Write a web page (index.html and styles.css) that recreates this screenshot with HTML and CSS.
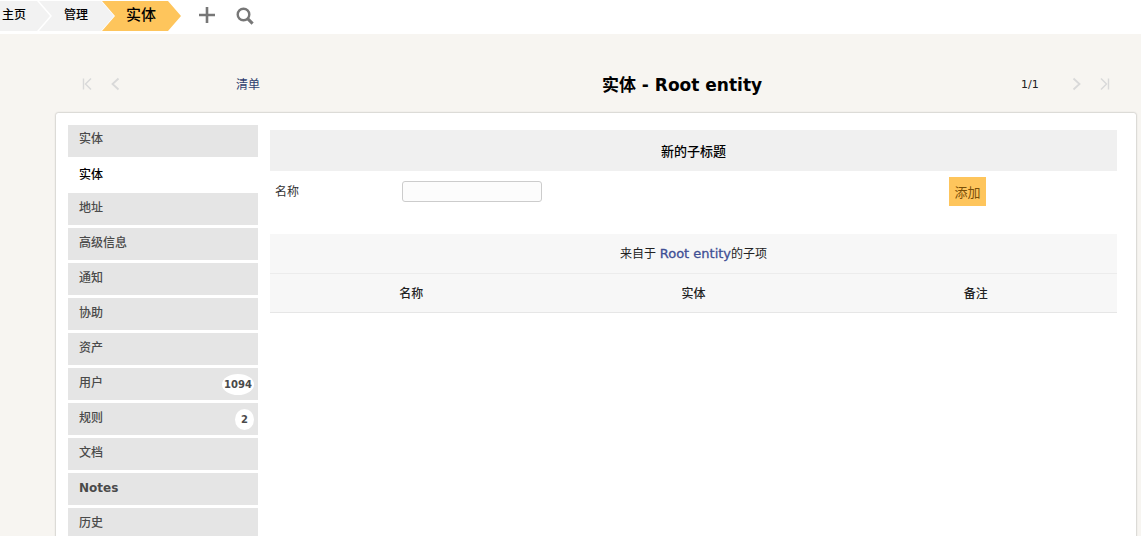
FILE: index.html
```html
<!DOCTYPE html>
<html lang="zh">
<head>
    <meta charset="UTF-8">
    <meta name="viewport" content="width=device-width, initial-scale=1.0">
    <title>实体</title>
    <link rel="stylesheet" href="styles.css">
</head>
<body>
    <nav class="topbar">
        <a class="crumb crumbhome">主页</a>
        <a class="crumb crumbadmin">管理</a>
        <a class="crumb crumbactive">实体</a>
        <svg class="topicon topplus" width="18" height="18" viewBox="0 0 18 18"><path d="M9 1v16M1 9h16" fill="none" stroke="#777" stroke-width="2.6"/></svg>
        <svg class="topicon topsearch" width="18" height="18" viewBox="0 0 18 18"><circle cx="7.5" cy="7.5" r="5.8" fill="none" stroke="#777" stroke-width="2.4"/><path d="M11.6 11.6l5 5" fill="none" stroke="#777" stroke-width="3"/></svg>
    </nav>

    <header class="pagehead">
        <div class="pagerleft">
            <svg class="pagericon" width="10" height="14" viewBox="0 0 10 14"><path d="M1.5 1.500v11M9 1.500L3.500 7 9 12.500" fill="none" stroke="#d9d9d9" stroke-width="1.400"/></svg>
            <svg class="pagericon" width="10" height="14" viewBox="0 0 10 14"><path d="M8.500 1.500L2.500 7l6 5.500" fill="none" stroke="#d9d9d9" stroke-width="1.800"/></svg>
        </div>
        <a class="listlink">清单</a>
        <h1 class="pagetitle">实体 - Root entity</h1>
        <span class="pagecount">1/1</span>
        <div class="pagerright">
            <svg class="pagericon" width="10" height="14" viewBox="0 0 10 14"><path d="M1.500 1.500L7.500 7l-6 5.500" fill="none" stroke="#d9d9d9" stroke-width="1.800"/></svg>
            <svg class="pagericon" width="10" height="14" viewBox="0 0 10 14"><path d="M1 1.500L6.500 7 1 12.500M8.500 1.500v11" fill="none" stroke="#d9d9d9" stroke-width="1.400"/></svg>
        </div>
    </header>

    <main class="card">
        <aside class="sidebar">
            <a class="sideitem sidefirst">实体</a>
            <a class="sideitem sideactive">实体</a>
            <a class="sideitem">地址</a>
            <a class="sideitem">高级信息</a>
            <a class="sideitem">通知</a>
            <a class="sideitem">协助</a>
            <a class="sideitem">资产</a>
            <a class="sideitem">用户<span class="badge">1094</span></a>
            <a class="sideitem">规则<span class="badge badgesmall">2</span></a>
            <a class="sideitem">文档</a>
            <a class="sideitem sidelatin">Notes</a>
            <a class="sideitem">历史</a>
        </aside>

        <section class="content">
            <h2 class="subtitle">新的子标题</h2>
            <form class="addform">
                <label class="addlabel" for="childname">名称</label>
                <input class="addinput" type="text" id="childname">
                <button class="addbutton" type="button">添加</button>
            </form>

            <div class="children">
                <div class="childrentitle">来自于 <a class="childlink">Root entity</a>的子项</div>
                <div class="childrenhead">
                    <div>名称</div>
                    <div>实体</div>
                    <div>备注</div>
                </div>
            </div>
        </section>
    </main>
</body>
</html>
```

FILE: styles.css
```css
body {
    margin: 0;
    height: 100vh;
    overflow: hidden;
    background-color: #f7f5f1;
    font-family: "DejaVu Sans", "Noto Sans CJK SC", sans-serif;
    font-size: 12px;
    line-height: 16px;
    color: #333;
}

.topbar {
    display: flex;
    align-items: flex-start;
    height: 34px;
    padding-top: 1px;
    box-sizing: border-box;
    background-color: #fff;
}

.crumb {
    display: flex;
    align-items: center;
    height: 30px;
    padding-bottom: 3px;
    box-sizing: border-box;
    font-weight: 500;
    color: #000;
    background-color: #f2f2f2;
    clip-path: polygon(0 0, calc(100% - 13px) 0, 100% 50%, calc(100% - 13px) 100%, 0 100%, 13px 50%);
}

.crumbhome {
    width: 50px;
    padding-left: 2px;
    clip-path: polygon(0 0, 37px 0, 100% 50%, 37px 100%, 0 100%);
}

.crumbadmin {
    width: 75px;
    margin-left: -11px;
    padding-left: 25px;
}

.crumbactive {
    width: 79px;
    margin-left: -12px;
    padding-left: 24px;
    font-size: 15px;
    background-color: #fec55c;
}

.topicon {
    margin-top: 5px;
}

.topplus {
    margin-left: 17px;
}

.topsearch {
    margin-left: 20px;
    margin-top: 6px;
}

.pagehead {
    display: flex;
    align-items: center;
    height: 34px;
    margin: 34px 0 11px;
    padding-left: 82px;
}

.pagerleft,
.pagerright {
    display: flex;
    gap: 18px;
}

.pagericon {
    display: block;
    margin-top: -3px;
}

.listlink {
    width: 24px;
    margin-left: 116px;
    color: #2f3f6f;
}

.pagetitle {
    width: 844px;
    margin: 0;
    font-size: 17px;
    font-weight: bold;
    text-align: center;
    color: #000;
}

.pagecount {
    width: 18px;
    margin-left: -83px;
    font-size: 11px;
    white-space: nowrap;
    color: #222;
}

.pagerright {
    margin-left: 33px;
}

.card {
    display: flex;
    gap: 12px;
    width: 1080px;
    height: 500px;
    margin-left: 56px;
    padding: 12px 19px 0 12px;
    box-sizing: border-box;
    background-color: #fff;
    box-shadow: 0 0 2px rgba(0, 0, 0, 0.4);
    border-radius: 2px;
}

.sidebar {
    display: flex;
    flex-direction: column;
    flex: none;
    width: 190px;
}

.sideitem {
    display: flex;
    flex: none;
    justify-content: space-between;
    height: 32px;
    margin-bottom: 3px;
    padding: 7px 4px 0 11px;
    box-sizing: border-box;
    font-weight: 500;
    color: #4a4a4a;
    background-color: #e5e5e5;
}

.sidefirst {
    margin-bottom: 0;
    padding-top: 6px;
}

.sideactive {
    height: 33px;
    padding-top: 10px;
    color: #000;
    background-color: #fff;
}

.sidelatin {
    font-weight: bold;
}

.badge {
    flex: none;
    width: 32px;
    height: 21px;
    margin-top: -1px;
    border-radius: 50%;
    font-size: 10px;
    font-weight: bold;
    line-height: 21px;
    text-align: center;
    background-color: #fff;
}

.badgesmall {
    width: 19px;
}

.content {
    flex: 1;
    min-width: 0;
    padding-top: 5px;
}

.subtitle {
    height: 41px;
    margin: 0;
    font-size: 13px;
    font-weight: 500;
    line-height: 43px;
    text-align: center;
    color: #000;
    background-color: #f0f0f0;
}

.addform {
    display: flex;
    align-items: center;
    height: 29px;
    margin: 6px 0 28px;
    padding-left: 5px;
}

.addlabel {
    width: 127px;
}

.addinput {
    width: 140px;
    height: 21px;
    margin: 0;
    padding: 0 4px;
    box-sizing: border-box;
    border: 1px solid #ccc;
    border-radius: 3px;
    background-color: #fcfcfc;
}

.addbutton {
    width: 37px;
    height: 29px;
    margin-left: 407px;
    padding: 0;
    border: none;
    font-family: inherit;
    font-size: 13px;
    color: #7a4f08;
    background-color: #fec55c;
}

.children {
    background-color: #f7f7f7;
}

.childrentitle {
    height: 40px;
    box-sizing: border-box;
    border-bottom: 1px solid #ececec;
    line-height: 40px;
    text-align: center;
    color: #222;
}

.childlink {
    font-size: 13px;
    -webkit-text-stroke: 0.3px #3f4f95;
    color: #3f4f95;
}

.childrenhead {
    display: grid;
    grid-template-columns: repeat(3, 1fr);
    height: 39px;
    box-sizing: border-box;
    border-bottom: 1px solid #e6e6e6;
    line-height: 41px;
    text-align: center;
    font-weight: 500;
    color: #222;
}
```
